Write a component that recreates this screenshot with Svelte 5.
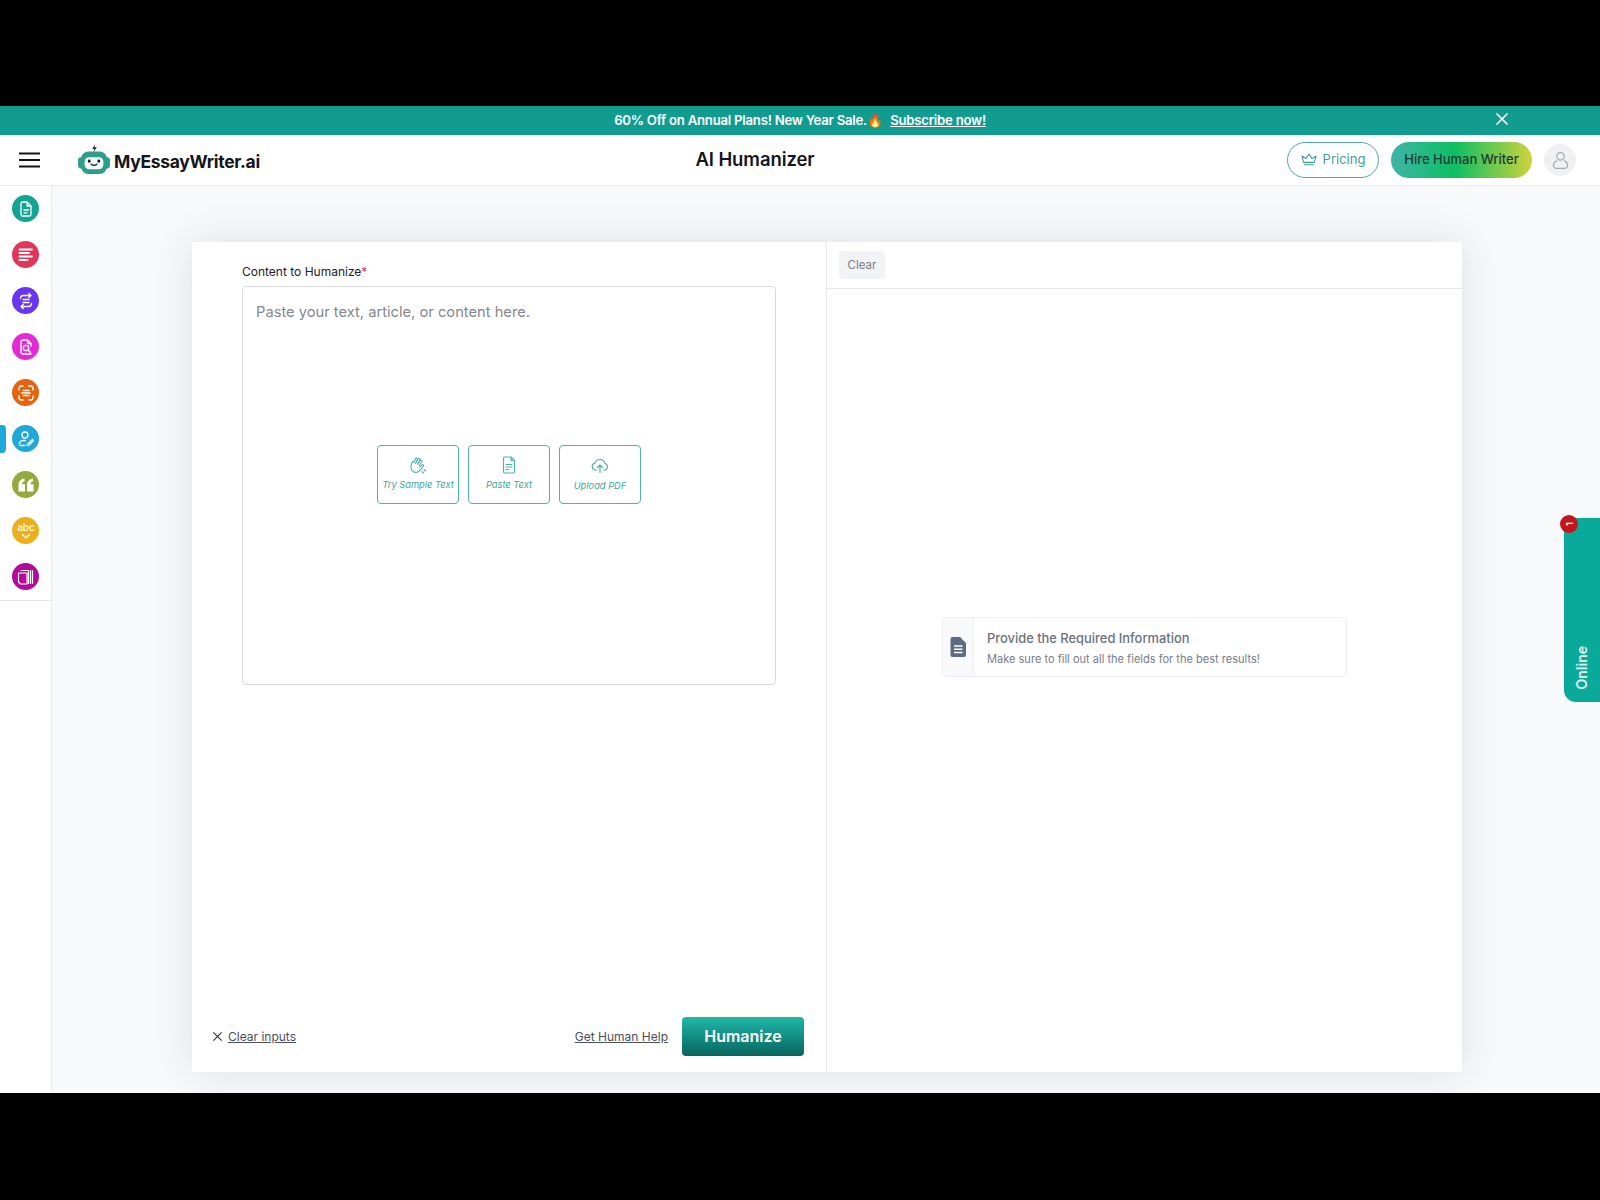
<script>
  const tools = [
    { color: '#12a594', icon: 'doc' },
    { color: '#e03658', icon: 'lines' },
    { color: '#6a35f0', icon: 'swap' },
    { color: '#e42bd3', icon: 'search' },
    { color: '#e4640f', icon: 'scan' },
    { color: '#1fa9d8', icon: 'user', active: true },
    { color: '#93ab3c', icon: 'quote' },
    { color: '#ecae1a', icon: 'abc' },
    { color: '#b6089a', icon: 'book' }
  ];
</script>

<div class="frame">
  <div class="banner">
    <span class="promo">60% Off on Annual Plans! New Year Sale.<span class="fire">🔥</span></span>
    <a href="#top" class="sub">Subscribe now!</a>
    <svg class="banner-x" viewBox="0 0 14 14" width="14" height="14"><path d="M2 2l10 10M12 2L2 12" stroke="#fff" stroke-width="1.7" fill="none" stroke-linecap="round"/></svg>
  </div>

  <header class="topbar">
    <div class="brand">
      <svg class="burger" viewBox="0 0 22 16" width="22" height="16"><path d="M0 1.500h21M0 8h21M0 14.500h21" stroke="#14161c" stroke-width="2" fill="none"/></svg>
      <svg class="logo" viewBox="0 0 34 32" width="32" height="30">
        <path d="M18.500 0l-3.400 5h2.400l-1.600 4.500 4-6h-2.600z" fill="#14161c"/>
        <rect x="0" y="14" width="6" height="12" rx="3" fill="#2f9d8b"/>
        <rect x="28" y="14" width="6" height="12" rx="3" fill="#2f9d8b"/>
        <rect x="3" y="8" width="28" height="24" rx="8" fill="#2f9d8b"/>
        <rect x="7" y="14" width="20" height="13" rx="5" fill="#f2fbf9"/>
        <rect x="10.500" y="16.500" width="2.800" height="3.600" rx="1.400" fill="#14161c"/>
        <rect x="20.700" y="16.500" width="2.800" height="3.600" rx="1.400" fill="#14161c"/>
        <path d="M14 21.500q3 2.600 6 0" stroke="#14161c" stroke-width="1.400" fill="none" stroke-linecap="round"/>
      </svg>
      <span class="brand-name">MyEssayWriter.ai</span>
    </div>
    <h1>AI Humanizer</h1>
    <div class="actions">
      <button class="pricing">
        <svg viewBox="0 0 18 14" width="16" height="13"><path d="M3 10.200L1 3l4.600 3L9 1l3.400 5L17 3l-2 7.200zM3.400 13h11.200" stroke="#3d9f97" stroke-width="1.200" fill="none" stroke-linejoin="round"/></svg>
        Pricing
      </button>
      <button class="hire">Hire Human Writer</button>
      <div class="avatar">
        <svg viewBox="0 0 18 20" width="17" height="19"><circle cx="9" cy="5.600" r="4" stroke="#a5a9b0" stroke-width="1.300" fill="none"/><path d="M5.400 10.400C3 11 1.600 12.800 1.600 15c0 2.400 1.400 3.400 3.400 3.400h8c2 0 3.400-1 3.400-3.400 0-2.200-1.400-4-3.800-4.600" stroke="#a5a9b0" stroke-width="1.300" fill="none"/></svg>
      </div>
    </div>
  </header>

  <div class="body">
    <nav class="sidebar">
      <div class="tool-list">
        {#each tools as tool}
          <div class="tool" class:active={tool.active}>
            <div class="disc" style="background:{tool.color}">
              <svg viewBox="0 0 20 20" width="20" height="20" fill="none" stroke="#fff" stroke-width="1.300" stroke-linecap="round" stroke-linejoin="round">
                {#if tool.icon === 'doc'}
                  <path d="M5 4.500A1.500 1.500 0 0 1 6.500 3H11l4 4v8.500a1.500 1.500 0 0 1-1.500 1.500h-7A1.500 1.500 0 0 1 5 15.500zM11 3v4h4M8 11h4.500M8 13.800h3"/>
                {:else if tool.icon === 'lines'}
                  <path stroke-width="1.800" d="M3.500 4.500h12.500M3.500 8h9.500M3.500 11.500h12.500M3.500 15h8"/>
                {:else if tool.icon === 'swap'}
                  <path d="M4.500 7.500c0-2 1.300-3 3-3H15M12.800 2.500L15 4.500l-2.200 2M15.500 12.500c0 2-1.300 3-3 3H5M7.200 17.500L5 15.500l2.200-2M7 8.500h6M7 11.500h6"/>
                {:else if tool.icon === 'search'}
                  <path d="M15 9V6.500L11.500 3H6.500A1.500 1.500 0 0 0 5 4.500v11A1.500 1.500 0 0 0 6.500 17h8a.8.8 0 0 0 .5-.1M11.500 3v3.500H15"/><circle cx="10" cy="11" r="2.700"/><path d="M12 13l2.500 2.500"/>
                {:else if tool.icon === 'scan'}
                  <path d="M3 7V5.500A2.500 2.500 0 0 1 5.500 3H7M13 3h1.500A2.500 2.500 0 0 1 17 5.500V7M17 13v1.500a2.500 2.500 0 0 1-2.500 2.500H13M7 17H5.500A2.500 2.500 0 0 1 3 14.500V13"/><path stroke-width="1.600" d="M7.500 7.500h5.500M6 10h8M7.500 12.500h5.500"/>
                {:else if tool.icon === 'user'}
                  <circle cx="9" cy="6" r="3"/><path d="M9.500 11.500H7a3.500 3.500 0 0 0-3.500 3.500v.300A1.200 1.200 0 0 0 4.700 16.500H9M16.500 10.500l1 1-4.500 4.700-1.800.500.500-1.800z"/>
                {:else if tool.icon === 'quote'}
                  <path fill="#fff" stroke="none" d="M2.500 16.500V10C2.500 6.500 4.800 4 8.500 3.500v2.800C7 6.700 6.200 7.600 6.100 9.200H9v7.300zM11 16.500V10C11 6.500 13.300 4 17 3.500v2.800c-1.500.4-2.300 1.300-2.400 2.900h2.900v7.300z"/>
                {:else if tool.icon === 'abc'}
                  <text x="10" y="9.500" text-anchor="middle" class="abc" fill="#fff" stroke="none">abc</text>
                  <path d="M6.500 13.500l3.500 3.500 3.500-3.500"/>
                {:else}
                  <path stroke-width="1.200" d="M2.500 6h8.500v11H4.500l-2-2zM12.500 3.500v13M14.500 3.500v13M16.500 3.500v13M5 3.500h7.500"/>
                {/if}
              </svg>
            </div>
          </div>
        {/each}
      </div>
    </nav>

    <main class="content">
      <section class="card">
        <div class="left">
          <div class="field">
            <label for="source">Content to Humanize<span class="req">*</span></label>
            <div class="box">
              <textarea id="source" placeholder="Paste your text, article, or content here."></textarea>
              <div class="quick">
                <button>
                  <svg viewBox="0 0 20 20" width="20" height="20" fill="none" stroke="#4fb3aa" stroke-width="1.100" stroke-linecap="round" stroke-linejoin="round"><path d="M5 6L3.400 9.500c-1 2.500-.6 5 1.400 6.800 2 1.600 5 1.400 6.600-.5l4-4.500c.8-1-.5-2.300-1.500-1.300l-2 2M11 10.500l3-4c.7-1-.7-2-1.500-1.100L9.500 9.200M9.500 9.200l2.500-4.500c.5-1-1-1.900-1.700-.9L7.500 8.500M7.500 8.500l2-4.500c.3-1-1-1.600-1.700-.7L5.800 7.500M16 14.500l1.500 1.500M14 16.500l1.500 1.500"/></svg>
                  <span>Try Sample Text</span>
                </button>
                <button>
                  <svg viewBox="0 0 20 20" width="20" height="20" fill="none" stroke="#4fb3aa" stroke-width="1.200" stroke-linecap="round" stroke-linejoin="round"><path d="M4.500 3.500A1.500 1.500 0 0 1 6 2h6l3.500 3.500v11A1.500 1.500 0 0 1 14 18H6a1.500 1.500 0 0 1-1.500-1.500zM12 2v3.500h3.500M7 9.500h6M7 12h6M7 14.500h3"/></svg>
                  <span>Paste Text</span>
                </button>
                <button class="up">
                  <svg viewBox="0 0 20 20" width="20" height="20" fill="none" stroke="#4fb3aa" stroke-width="1.200" stroke-linecap="round" stroke-linejoin="round"><path d="M6.500 15H5.500a3.500 3.500 0 0 1-.6-6.900 5.200 5.200 0 0 1 10 .4A3.300 3.300 0 0 1 14.500 15h-1M10 17.500v-7M7.500 12.500l2.500-2.500 2.500 2.500"/></svg>
                  <span>Upload PDF</span>
                </button>
              </div>
            </div>
          </div>
          <div class="foot">
            <div class="clear-inputs">
              <svg viewBox="0 0 12 12" width="11" height="11"><path d="M1.500 1.500l9 9M10.500 1.500l-9 9" stroke="#333844" stroke-width="1.300" fill="none"/></svg>
              <a href="#top">Clear inputs</a>
            </div>
            <div class="foot-right">
              <a href="#top">Get Human Help</a>
              <button class="go">Humanize</button>
            </div>
          </div>
        </div>

        <div class="right">
          <div class="right-head"><button class="clear">Clear</button></div>
          <div class="right-body">
            <div class="notice">
              <div class="notice-icon">
                <svg viewBox="0 0 16 20" width="16" height="20"><path d="M2.500 0H10l6 6v12a2 2 0 0 1-2 2H2.500a2 2 0 0 1-2-2V2a2 2 0 0 1 2-2z" fill="#5d6b82"/><path d="M4 9h8.500M4 12.300h8.500M4 15.600h8.500" stroke="#fff" stroke-width="1.500"/></svg>
              </div>
              <div class="notice-text">
                <strong>Provide the Required Information</strong>
                <p>Make sure to fill out all the fields for the best results!</p>
              </div>
            </div>
          </div>
        </div>
      </section>
    </main>
  </div>

  <div class="chat-tab">
    <span class="chat-badge">1</span>
    <span class="chat-label">Online</span>
  </div>
</div>

<style>
  :global(body) {
    margin: 0;
    background: #000;
  }

  .frame {
    position: relative;
    box-sizing: border-box;
    height: 1200px;
    padding: 106px 0 107px;
    display: flex;
    flex-direction: column;
    font-family: Inter, "Liberation Sans", sans-serif;
    background: #000;
    color: #14161c;
  }

  button {
    font-family: inherit;
    cursor: pointer;
  }

  .banner {
    position: relative;
    height: 29px;
    flex: none;
    display: flex;
    align-items: center;
    justify-content: center;
    gap: 7px;
    padding-bottom: 1px;
    box-sizing: border-box;
    background: #129c8f;
    color: #fff;
    font-size: 13.200px;
    font-weight: 600;
    letter-spacing: -0.25px;
  }

  .fire {
    font-size: 13px;
    letter-spacing: 0;
    font-family: "Noto Color Emoji", Inter, sans-serif;
  }

  .sub {
    color: #fff;
    text-decoration: underline;
  }

  .banner-x {
    position: absolute;
    right: 91px;
    top: 6px;
  }

  .topbar {
    flex: none;
    height: 51px;
    box-sizing: border-box;
    display: flex;
    align-items: center;
    justify-content: space-between;
    padding: 0 24px 0 19px;
    background: #fff;
    border-bottom: 1px solid #e8eaee;
  }

  .brand {
    display: flex;
    align-items: center;
    width: 280px;
  }

  .burger {
    margin-right: 37px;
  }

  .logo {
    margin-right: 4px;
    margin-top: -3px;
  }

  .brand-name {
    font-size: 17.500px;
    font-weight: 700;
    letter-spacing: -0.3px;
    margin-top: 3px;
  }

  h1 {
    margin: 0 76px 3px 0;
    font-size: 18.500px;
    font-weight: 600;
    letter-spacing: -0.1px;
  }

  .actions {
    display: flex;
    align-items: center;
  }

  .pricing {
    box-sizing: border-box;
    width: 92px;
    height: 36px;
    display: flex;
    align-items: center;
    justify-content: center;
    gap: 6px;
    border: 1px solid #4fa9a2;
    border-radius: 18px;
    background: #fff;
    color: #3d9f97;
    font-size: 13px;
    padding: 0 0 2px;
  }

  .hire {
    box-sizing: border-box;
    width: 141px;
    height: 36px;
    margin-left: 12px;
    border: none;
    border-radius: 18px;
    padding: 0 0 2px;
    color: #1f3a34;
    font-size: 13px;
    font-weight: 500;
    background: linear-gradient(90deg, #3fb5a8 0%, #0cbf63 45%, #cfd33c 100%);
  }

  .avatar {
    width: 32px;
    height: 32px;
    margin-left: 12px;
    border-radius: 50%;
    background: #eff1f3;
    display: flex;
    align-items: center;
    justify-content: center;
  }

  .body {
    flex: 1;
    min-height: 0;
    display: flex;
  }

  .sidebar {
    flex: none;
    width: 52px;
    box-sizing: border-box;
    background: #fff;
    border-right: 1px solid #e8eaee;
  }

  .tool-list {
    border-bottom: 1px solid #dfe2e6;
  }

  .tool {
    position: relative;
    height: 46px;
    display: flex;
    align-items: center;
    justify-content: center;
  }

  .tool.active::before {
    content: "";
    position: absolute;
    left: 0;
    top: 9px;
    width: 6px;
    height: 28px;
    border-radius: 0 4px 4px 0;
    background: #1fa9d8;
  }

  .disc {
    width: 27px;
    height: 27px;
    margin-top: -1px;
    border-radius: 50%;
    display: flex;
    align-items: center;
    justify-content: center;
  }

  .abc {
    font-size: 10px;
    font-weight: 500;
  }

  .content {
    flex: 1;
    min-width: 0;
    display: flex;
    box-sizing: border-box;
    padding: 56px 138px 21px 140px;
    background: #f8f9fb;
  }

  .card {
    flex: 1;
    display: flex;
    background: #fff;
    box-shadow: 0 0 40px rgba(30, 40, 60, 0.12);
  }

  .left {
    flex: none;
    width: 635px;
    box-sizing: border-box;
    display: flex;
    flex-direction: column;
    justify-content: space-between;
    border-right: 1px solid #e5e7eb;
    padding: 0 22px 16px 20px;
  }

  .field {
    padding: 22px 28px 0 30px;
  }

  label {
    display: block;
    margin-bottom: 6px;
    font-size: 12px;
    line-height: 16px;
    color: #1d2129;
  }

  .req {
    color: #dc3545;
  }

  .box {
    position: relative;
    height: 399px;
  }

  textarea {
    display: block;
    box-sizing: border-box;
    width: 100%;
    height: 100%;
    resize: none;
    border: 1px solid #d9dcdf;
    border-radius: 4px;
    padding: 15px 13px;
    font-family: inherit;
    font-size: 14.700px;
    line-height: 20px;
    outline: none;
  }

  textarea::placeholder {
    color: #85888c;
    opacity: 1;
  }

  .quick {
    position: absolute;
    left: 135px;
    top: 159px;
    display: flex;
    gap: 9px;
  }

  .quick button {
    box-sizing: border-box;
    width: 82px;
    height: 59px;
    padding: 0 0 4px;
    display: flex;
    flex-direction: column;
    align-items: center;
    justify-content: center;
    gap: 4px;
    border: 1px solid #4fb3aa;
    border-radius: 4px;
    background: #fff;
    color: #3aa79d;
    font-size: 9.300px;
    font-style: italic;
  }

  .quick .up span {
    margin-top: 1px;
  }

  .foot {
    display: flex;
    align-items: center;
    justify-content: space-between;
  }

  .foot a {
    color: #4a4f5a;
    font-size: 12px;
    text-decoration: underline;
  }

  .clear-inputs {
    display: flex;
    align-items: center;
    gap: 5px;
  }

  .foot-right {
    display: flex;
    align-items: center;
    gap: 14px;
  }

  .go {
    box-sizing: border-box;
    width: 122px;
    height: 39px;
    padding: 0 0 1px;
    border: none;
    border-radius: 4px;
    color: #fff;
    font-size: 16px;
    font-weight: 600;
    background: linear-gradient(180deg, #20b8a8 0%, #06655f 100%);
  }

  .right {
    flex: 1;
    min-width: 0;
    display: flex;
    flex-direction: column;
  }

  .right-head {
    flex: none;
    height: 47px;
    box-sizing: border-box;
    padding: 9px 12px;
    border-bottom: 1px solid #e5e7eb;
  }

  .clear {
    width: 46px;
    height: 28px;
    padding: 0;
    border: none;
    border-radius: 4px;
    background: #f1f3f6;
    color: #777d89;
    font-size: 11.500px;
  }

  .right-body {
    flex: 1;
    display: flex;
    align-items: center;
    justify-content: center;
  }

  .notice {
    box-sizing: border-box;
    width: 405px;
    height: 60px;
    display: flex;
    border: 1px solid #eceef1;
    border-radius: 4px;
    margin-bottom: 67px;
  }

  .notice-icon {
    flex: none;
    width: 30px;
    display: flex;
    align-items: center;
    justify-content: center;
    background: #f8f9fb;
    border-right: 1px solid #eceef1;
  }

  .notice-text {
    padding: 13px 13px 0;
  }

  .notice-text strong {
    display: block;
    color: #6b7280;
    font-size: 12.900px;
    font-weight: 500;
    line-height: 16px;
  }

  .notice-text p {
    margin: 5px 0 0;
    color: #767d8a;
    font-size: 11.050px;
    line-height: 15px;
  }

  .chat-tab {
    position: absolute;
    right: 0;
    top: 518px;
    width: 36px;
    height: 184px;
    box-sizing: border-box;
    display: flex;
    align-items: flex-end;
    justify-content: center;
    padding: 0 1px 13px 0;
    background: #0aaa9b;
    border-radius: 0 0 0 12px;
  }

  .chat-label {
    writing-mode: vertical-rl;
    transform: rotate(180deg);
    color: #e4f7f4;
    font-size: 14px;
    font-weight: 600;
  }

  .chat-badge {
    position: absolute;
    left: -4px;
    top: -3px;
    width: 18px;
    height: 18px;
    border-radius: 50%;
    background: #c3161c;
    color: #fff;
    font-size: 9px;
    font-weight: 700;
    display: flex;
    align-items: center;
    justify-content: center;
    transform: rotate(-90deg);
  }
</style>
